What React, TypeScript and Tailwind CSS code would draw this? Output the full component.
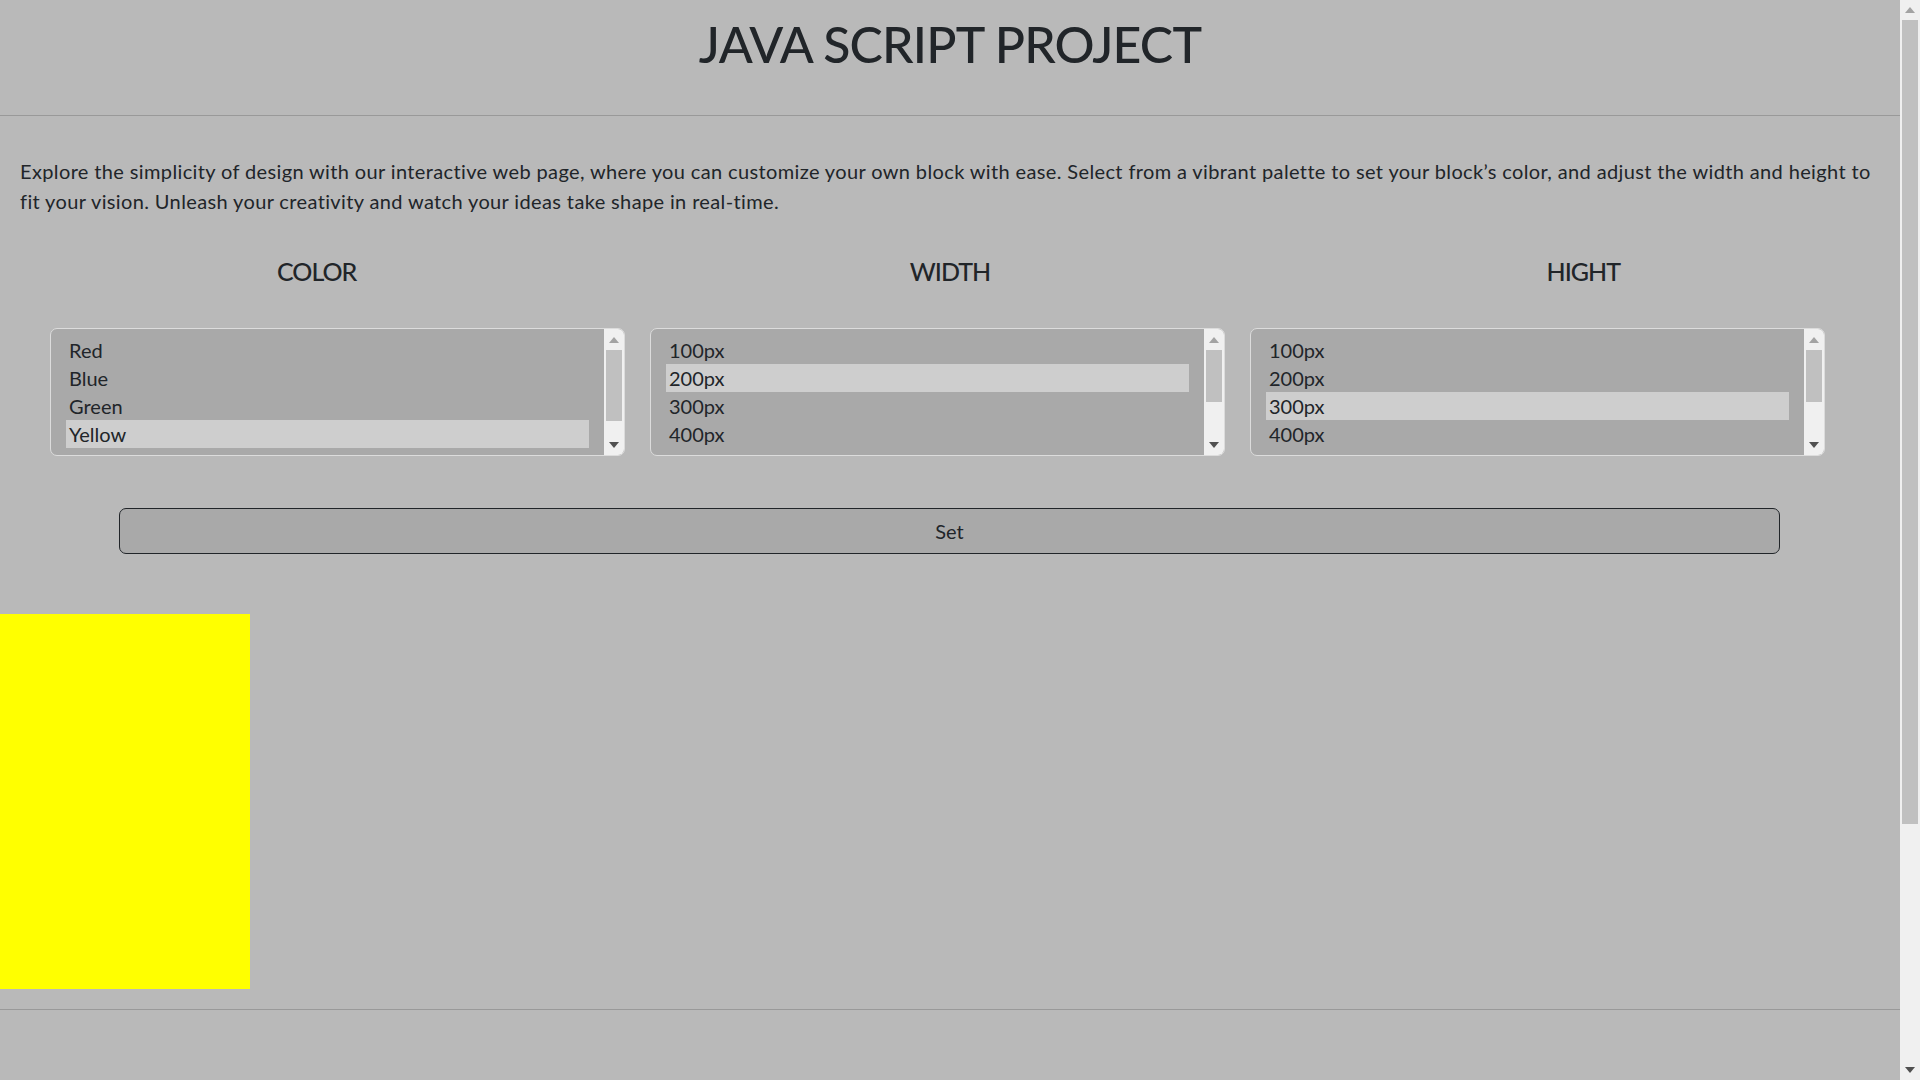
import React from "react";

const FONT = { fontFamily: '"Lato", "Noto Sans", "Liberation Sans", sans-serif' };

function UpArrow({ dark }: { dark?: boolean }) {
  return (
    <svg width="10" height="6" viewBox="0 0 10 6">
      <polygon points="5,0 10,6 0,6" fill={dark ? "#505050" : "#a3a3a3"} />
    </svg>
  );
}
function DownArrow({ dark }: { dark?: boolean }) {
  return (
    <svg width="10" height="6" viewBox="0 0 10 6">
      <polygon points="0,0 10,0 5,6" fill={dark ? "#505050" : "#a3a3a3"} />
    </svg>
  );
}

function ListBox({ options, selected, thumb }: { options: string[]; selected: number; thumb: number }) {
  return (
    <div className="flex h-[128px] w-[575px] overflow-hidden rounded-[7px] border border-[#dcdcdc] bg-[#a9a9a9]">
      <div className="flex-1 px-[15px] py-[7px]">
        {options.map((o, i) => (
          <div
            key={o}
            className={
              "h-[28px] pl-[3px] text-[20px] leading-[28px] text-[#212529] " +
              (i === selected ? "bg-[#cecece]" : "")
            }
          >
            {o}
          </div>
        ))}
      </div>
      <div className="flex w-[20px] flex-col items-center bg-[#f0f0f0]">
        <div className="flex h-[21px] items-center justify-center">
          <UpArrow />
        </div>
        <div className="w-[16px] bg-[#c0c0c0]" style={{ height: thumb }} />
        <div className="flex-1" />
        <div className="flex h-[20px] items-center justify-center">
          <DownArrow dark />
        </div>
      </div>
    </div>
  );
}

export default function App() {
  return (
    <div className="flex h-[1080px] w-[1920px] overflow-hidden bg-[#b9b9b9] text-[#212529]" style={FONT}>
      <div className="flex w-[1900px] flex-col">
        <header className="flex h-[115px] justify-center pt-[14px]">
          <h1 className="text-[50px] font-medium leading-[60px] tracking-[-0.8px] text-[#212529]">
            JAVA SCRIPT PROJECT
          </h1>
        </header>
        <hr className="border-0 border-t border-[#999999]" />
        <p className="mt-[40px] px-[20px] text-[20px] leading-[30px] tracking-[0.37px]">
          Explore the simplicity of design with our interactive web page, where you can customize your own block with
          ease. Select from a vibrant palette to set your block’s color, and adjust the width and height to fit your
          vision. Unleash your creativity and watch your ideas take shape in real-time.
        </p>
        <div className="mt-[40px] grid grid-cols-3 text-center text-[25px] font-medium leading-[30px] tracking-[-1px]">
          <div>COLOR</div>
          <div>WIDTH</div>
          <div>HIGHT</div>
        </div>
        <div className="mt-[42px] flex gap-[25px] pl-[50px]">
          <ListBox options={["Red", "Blue", "Green", "Yellow"]} selected={3} thumb={71} />
          <ListBox options={["100px", "200px", "300px", "400px"]} selected={1} thumb={52} />
          <ListBox options={["100px", "200px", "300px", "400px"]} selected={2} thumb={52} />
        </div>
        <button className="ml-[119px] mt-[52px] h-[46px] w-[1661px] rounded-[7px] border border-[#212529] bg-[#a9a9a9] text-[20px] leading-[30px] text-[#212529]">
          Set
        </button>
        <div className="mt-[60px] h-[375px] w-[250px] bg-[#ffff00]" />
        <hr className="mt-[20px] border-0 border-t border-[#999999]" />
      </div>
      <div className="flex w-[20px] flex-col items-center bg-[#f0f0f0]">
        <div className="flex h-[20px] items-center justify-center">
          <UpArrow />
        </div>
        <div className="h-[804px] w-[16px] bg-[#c0c0c0]" />
        <div className="flex-1" />
        <div className="flex h-[20px] items-center justify-center">
          <DownArrow dark />
        </div>
      </div>
    </div>
  );
}
